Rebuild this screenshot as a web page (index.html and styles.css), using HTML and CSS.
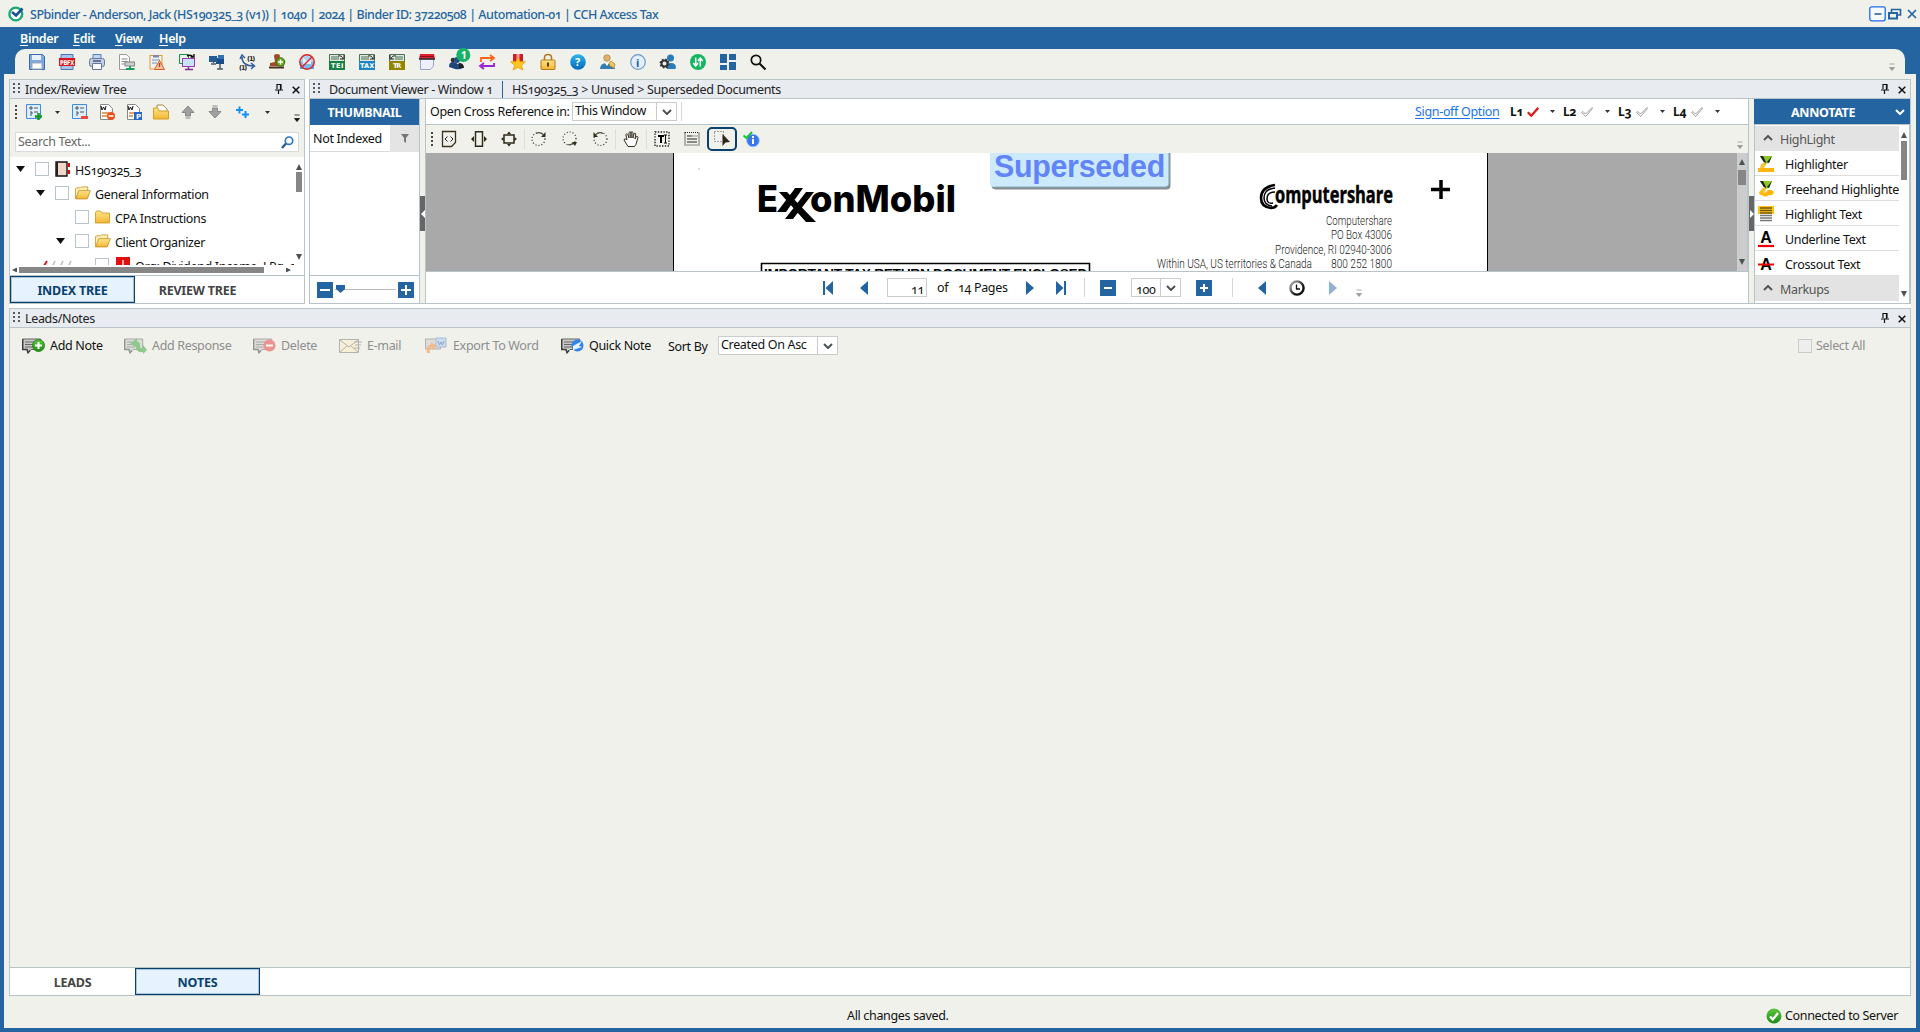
FILE: index.html
```html
<!DOCTYPE html>
<html lang="en">
<head>
<meta charset="utf-8">
<title>SPbinder</title>
<link rel="stylesheet" href="styles.css">
</head>
<body>
<svg class="defs" aria-hidden="true">
  <defs>
    <linearGradient id="gold" x2="0" y2="1"><stop offset="0" stop-color="#ffe58a"/><stop offset="1" stop-color="#f2b632"/></linearGradient>
    <linearGradient id="sky" x2="0" y2="1"><stop offset="0" stop-color="#29b6f0"/><stop offset="1" stop-color="#0667b8"/></linearGradient>
    <linearGradient id="ok" x2="0" y2="1"><stop offset="0" stop-color="#5cc83c"/><stop offset="1" stop-color="#1f8a1c"/></linearGradient>
    <linearGradient id="dial" x2="1" y2="1"><stop offset="0" stop-color="#bbb"/><stop offset=".7" stop-color="#111"/></linearGradient>
  </defs>
  <symbol id="pin" viewBox="0 0 8 12"><path d="M2 6V1.500h4V6M5.500 1v6M0 7h8M3.500 7v4" fill="none" stroke="#111" stroke-width="1.200"/></symbol>
  <symbol id="close" viewBox="0 0 8 8"><path d="M.7.7l6.600 6.600M7.300.7L.7 7.300" stroke="#111" stroke-width="1.500"/></symbol>
  <symbol id="grip" viewBox="0 0 7 10"><path d="M0 0h2v2H0zM5 0h2v2H5zM0 4h2v2H0zM5 4h2v2H5zM0 8h2v2H0zM5 8h2v2H5z" fill="#555b60"/></symbol>
  <symbol id="dots" viewBox="0 0 2 14"><path d="M0 0h2v2H0zM0 4h2v2H0zM0 8h2v2H0zM0 12h2v2H0z" fill="#444"/></symbol>
  <symbol id="caret" viewBox="0 0 5 3"><path d="M0 0h5L2.500 3z" fill="#333"/></symbol>
  <symbol id="more" viewBox="0 0 6 8"><path d="M.5 1h5M.5 4.500h5L3 7.500z" stroke="currentColor" fill="currentColor" stroke-width=".8"/></symbol>
  <symbol id="chev" viewBox="0 0 10 6"><path d="M1 1l4 4 4-4" fill="none" stroke="currentColor" stroke-width="2"/></symbol>
  <symbol id="up" viewBox="0 0 6 6"><path d="M3 0l3 6H0z" fill="#4b5256"/></symbol>
  <symbol id="checkmark" viewBox="0 0 12 10"><path d="M.5 5.500L2 4.500 4.500 7 11 .5l.7.700L4.800 9.500z" fill="currentColor" stroke="#909090" stroke-width=".8"/></symbol>
  <symbol id="redcheck" viewBox="0 0 12 10"><path d="M.8 5.300l3.500 3.500L11.300.8" fill="none" stroke="#e01818" stroke-width="2.200"/></symbol>
  <symbol id="folder" viewBox="0 0 16 14"><path d="M.5 13V2.500l1-1.500h4l1.500 2h7.500v10z" fill="url(#gold)" stroke="#c89420" stroke-width=".8"/></symbol>
  <symbol id="folderopen" viewBox="0 0 17 14"><path d="M.5 13V2.500l1-1h4L7 .5h6.500V5" fill="#fff0b0" stroke="#c08a20" stroke-width=".8"/><path d="M.7 13.300L4 4.500h12.300L13 13.300z" fill="url(#gold)" stroke="#c08a20" stroke-width=".8"/></symbol>
  <symbol id="note" viewBox="0 0 23 16"><path d="M.7 1h18v10.500H9L6 14.800l-1-3.300H.7z" fill="#c9c9c9" stroke="#666"/><path d="M.7 1v10.500H5l1 3.300 2-2.300" fill="none" stroke="#3c3c3c" stroke-width="1.400"/><path d="M3 4h10M3 6.500h9M3 9h8" stroke="#666"/></symbol>
  <symbol id="page" viewBox="0 0 16 16"><path d="M1.500.5h8l4 4v11h-12z" fill="#fff" stroke="#888"/></symbol>
</svg>

<div class="app">
  <header class="titlebar">
    <svg class="logo" viewBox="0 0 16 16"><circle cx="7.800" cy="8" r="6.400" fill="#fff" stroke="#19a974" stroke-width="2.400"/><path d="M4 6l4 3.500 6.500-7" fill="none" stroke="#1f4e96" stroke-width="2.600"/></svg>
    <span class="title">SPbinder - Anderson, Jack (HS190325_3 (v1)) | 1040 | 2024 | Binder ID: 37220508 | Automation-01 | CCH Axcess Tax</span>
    <svg class="winctl" width="50" height="16" viewBox="0 0 50 16"><rect x=".8" y=".8" width="15.400" height="14" rx="2" fill="#f6faff" stroke="#1a6cf0" stroke-width="1.300"/><path d="M5.500 8h7" stroke="#2465a1" stroke-width="1.600"/><path d="M22.500 6V3.500h9V9H29" fill="none" stroke="#2465a1" stroke-width="1.600"/><rect x="20" y="7" width="8" height="5.500" fill="none" stroke="#2465a1" stroke-width="2"/><path d="M39 4l8 8M47 4l-8 8" stroke="#2465a1" stroke-width="1.700"/></svg>
  </header>
  <nav class="menubar"><span><u>B</u>inder</span><span><u>E</u>dit</span><span><u>V</u>iew</span><span><u>H</u>elp</span></nav>

  <div class="ribbon">
    <svg viewBox="0 0 16 16"><path d="M.5.5h13l2 2v13H.5z" fill="#7ea8de" stroke="#3a68b4"/><path d="M3 1h9v5H3z" fill="#e8f0fb"/><path d="M3 9h10v6H3z" fill="#fff" stroke="#9ab"/></svg>
    <svg viewBox="0 0 16 16"><path d="M2 .5h12v15H2z" fill="#a9c4e8" stroke="#4a75b8"/><path d="M0 4h16v8H0z" fill="#d8141c"/><text x="1" y="10.700" class="tag" textLength="14" lengthAdjust="spacingAndGlyphs">PBFX</text></svg>
    <svg viewBox="0 0 16 16"><path d="M4 .5h8V5H4z" fill="#bcd8f7" stroke="#5a7fb5"/><rect x=".5" y="4.500" width="15" height="8" rx="2" fill="#c5cfe2" stroke="#66799c"/><path d="M3.500 9.500h9v6h-9z" fill="#fff" stroke="#66799c"/><path d="M4 7h8" stroke="#46587c" stroke-width="1.500"/></svg>
    <svg viewBox="0 0 16 16"><path d="M.5.500h7l3 3v12H.5z" fill="#fff" stroke="#999"/><path d="M2.500 5h6M2.500 7.500h6M2.500 10h4" stroke="#888"/><rect x="6" y="8" width="9.500" height="4" fill="#ccc" stroke="#888"/><path d="M11 12v3M7 15h8.500" stroke="#169c5c" stroke-width="1.800"/></svg>
    <svg viewBox="0 0 16 16"><rect x="1" y="1.500" width="12" height="13.500" fill="#f2f2ee" stroke="#e09a30"/><path d="M4 1h6v2.500H4z" fill="#7889b0"/><path d="M3 6h8M3 9h5" stroke="#6a92c8"/><path d="M10.500 6.500l5 9h-10z" fill="#f0c8a0" stroke="#d95a28"/><path d="M10.500 9v4" stroke="#c33" stroke-width="1.400"/></svg>
    <svg viewBox="0 0 16 16"><path d="M.5.500h9v9h-9z" fill="#e6f6ea" stroke="#1d8a48"/><rect x="3.500" y="4.500" width="12" height="8" fill="#c6e4ff" stroke="#a238b8"/><path d="M9.500 13v2M6 15.500h8" stroke="#7a2a98" stroke-width="1.400"/><path d="M8 2q4-2 6 1M11.500 3H15V0" fill="none" stroke="#111" stroke-width="1.400"/></svg>
    <svg viewBox="0 0 16 16"><path d="M7 4h8v6H7z" fill="#1b4e88"/><path d="M9 1h6v4H9z" fill="#2e72b4"/><path d="M0 2h8v6H0z" fill="#235d98"/><path d="M4.500 7v2M11 10v5M8 15h6M2 10h5" stroke="#4a5a68" stroke-width="1.500"/></svg>
    <svg viewBox="0 0 16 16"><path d="M3 3q0 9 12 9M1 5l2-4 3 3M12 9l3.500 3L12 15" fill="none" stroke="#335c9e" stroke-width="1.500"/><text x="8" y="6.500" class="mini" textLength="8">(1)</text><text x="0" y="15.500" class="mini" textLength="8">(1)</text></svg>
    <svg viewBox="0 0 16 16"><path d="M5 2q0-2 3-2t3 2L9.500 8H15v4H1V9l5-1z" fill="#a04c28"/><path d="M0 13.500h15" stroke="#4b2c20" stroke-width="2"/><circle cx="11.500" cy="8" r="4.300" fill="#68a820" stroke="#36700c"/><path d="M9 8h5M11.500 5.500v5" stroke="#fff" stroke-width="1.400"/></svg>
    <svg viewBox="0 0 16 16"><path d="M1 8h14v7H1z" fill="#4ba4ef"/><circle cx="8" cy="8" r="7.200" fill="#8ac4ef" fill-opacity=".7" stroke="#e02424" stroke-width="1.500"/><path d="M4 4l4 3 4-3v6H4z" fill="#e2f0fb"/><path d="M3 13L13 3" stroke="#e02424" stroke-width="1.500"/></svg>
    <svg viewBox="0 0 16 16"><path d="M.5.500h15v7H.5z" fill="#dfe8df" stroke="#4d7450"/><path d="M2 3h8M2 5h8" stroke="#487050"/><path d="M9 2q4-1 5 3M11 5h4V1" fill="none" stroke="#222"/><path d="M0 7h16v9H0z" fill="#197e43"/><text x="2" y="14" class="tag" textLength="12">TEI</text></svg>
    <svg viewBox="0 0 16 16"><path d="M.5.500h15v7H.5z" fill="#dfe8df" stroke="#4d7450"/><path d="M2 3h8M2 5h8" stroke="#487050"/><path d="M9 2q4-1 5 3M11 5h4V1" fill="none" stroke="#222"/><path d="M0 7h16v9H0z" fill="#1d83c4"/><text x="1" y="14" class="tag" textLength="14">TAX</text></svg>
    <svg viewBox="0 0 16 16"><path d="M.5.500h15v7H.5z" fill="#dfe8df" stroke="#4d7450"/><path d="M6 3h8M6 5h8" stroke="#487050"/><path d="M7 2q-4-1-5 3M5 5H1V1" fill="none" stroke="#222"/><path d="M0 7h16v9H0z" fill="#918500"/><text x="4" y="14" class="tag" textLength="8">TR</text></svg>
    <svg viewBox="0 0 16 16"><path d="M1 0h14l1 5H0z" fill="#e0202c"/><path d="M1 2.500h14" stroke="#8c1018"/><path d="M1.500 5h13v7l-3 3.500h-10z" fill="#edf0fa" stroke="#9ba2c8"/><path d="M0 5h16" stroke="#222" stroke-width="1.500"/></svg>
    <svg viewBox="0 0 16 16"><circle cx="4" cy="6" r="2.300" fill="#333"/><circle cx="8" cy="6" r="3" fill="#224f86"/><path d="M0 13q0-5 4-5t4 2q4-2 6 4-3 2-8 1z" fill="#1f4679"/><path d="M10 9q5 0 5 5h-5z" fill="#222"/><circle cx="14.300" cy="1" r="7" fill="#17b26a"/><text x="12" y="4.500" class="count">1</text></svg>
    <svg viewBox="0 0 16 16"><path d="M2 8V4h11M11 1l4 3-4 3" fill="none" stroke="#ff641e" stroke-width="1.800"/><path d="M15 9v3H3M5 9l-4 3 4 3" fill="none" stroke="#9a20d0" stroke-width="1.800"/></svg>
    <svg viewBox="0 0 16 16"><path d="M3 0h10v8H3z" fill="#cc2028"/><path d="M6.500 0h3v6h-3z" fill="#f29c9c"/><path d="M8 3l2 4.500 5.500.3-4 3.500 1.500 4.700-5-2.500L3 16l1.500-4.700-4-3.500L6 7.500z" fill="#ffc41e" stroke="#e39a0c" stroke-width=".7"/></svg>
    <svg viewBox="0 0 16 16"><path d="M4.500 7V3.500q0-3 3.500-3t3.500 3V7" fill="none" stroke="#ac7724" stroke-width="1.500"/><rect x="1" y="6" width="14" height="9.500" rx="1" fill="url(#gold)" stroke="#b97916"/><path d="M8 8.500v4" stroke="#5e3a08" stroke-width="2"/></svg>
    <svg viewBox="0 0 16 16"><circle cx="8" cy="8" r="7.800" fill="url(#sky)"/><text x="5" y="12" class="sym light">?</text></svg>
    <svg viewBox="0 0 16 16"><circle cx="7" cy="4" r="3.300" fill="#dfb26c" stroke="#a3782e" stroke-width=".6"/><path d="M0 15q0-6 7-6t8 6z" fill="#347eb4"/><path d="M5 9l2 3 2-3z" fill="#fff"/><path d="M9 9l2-2 4 3-1 4-4-2z" fill="#f2c454" stroke="#ae812a" stroke-width=".7"/></svg>
    <svg viewBox="0 0 16 16"><circle cx="8" cy="8" r="7.300" fill="#e3f0fc" stroke="#6e98c8" stroke-width="1.200"/><text x="6" y="12.500" class="sym blue">i</text></svg>
    <svg viewBox="0 0 16 16"><circle cx="10.500" cy="4" r="3.500" fill="#287cb8"/><path d="M7 15q-2-6 4-6 5 0 5 5l-1 1z" fill="#287cb8"/><circle cx="4.500" cy="9.500" r="3" fill="#eee" stroke="#333" stroke-width="2"/><circle cx="4.500" cy="9.500" r="4.300" fill="none" stroke="#333" stroke-width="1.400" stroke-dasharray="1.700"/></svg>
    <svg viewBox="0 0 16 16"><circle cx="8" cy="8" r="8" fill="#16b561"/><path d="M5.700 3.500v8M3.300 9l2.400 3 2.300-3M10.300 12.500v-8M8 7l2.300-3 2.400 3" fill="none" stroke="#fff" stroke-width="1.500"/></svg>
    <svg viewBox="0 0 16 16"><path d="M0 0h7v9H0zM9 0h7v6H9zM0 11h7v5H0zM9 8h7v8H9z" fill="#2465a1"/></svg>
    <svg viewBox="0 0 16 16"><circle cx="6" cy="6" r="4.700" fill="none" stroke="#111" stroke-width="1.700"/><path d="M9.500 9.500l6 6" stroke="#111" stroke-width="2.200"/></svg>
    <svg class="more dim"><use href="#more"/></svg>
  </div>

  <main class="workspace">
    <section class="top">
      <section class="panel index">
        <div class="phead"><svg class="gr"><use href="#grip"/></svg><span class="ptitle">Index/Review Tree</span><svg class="pin"><use href="#pin"/></svg><svg class="cl"><use href="#close"/></svg></div>
        <div class="treebar">
          <svg class="dots"><use href="#dots"/></svg>
          <svg class="i16" viewBox="0 0 16 16"><path d="M.5.500h14v14H.5z" fill="#dfefff" stroke="#3d8ce0"/><path d="M3 4h4M5 2v4M8 4h4M5 7v2h2M8 8h4M5 9v3" stroke="#456" fill="none"/><path d="M9 12.500h7M12.500 9v7" stroke="#159a20" stroke-width="2.500"/></svg>
          <svg class="car"><use href="#caret"/></svg>
          <svg class="i16" viewBox="0 0 16 16"><path d="M.5.500h14v14H.5z" fill="#dfefff" stroke="#3d8ce0"/><path d="M3 4h4M5 2v4M8 4h4M5 7v2h2M8 8h4M5 9v3" stroke="#456" fill="none"/><path d="M9 13.500h7" stroke="#f04a3c" stroke-width="3"/></svg>
          <svg class="i16" viewBox="0 0 16 16"><use href="#page"/><path d="M2 2l1 4 1.500-3L6 6l1-4" fill="none" stroke="#111"/><path d="M3 9h7M3 12h5" stroke="#e0843c" stroke-width="1.500"/><circle cx="12" cy="12" r="4" fill="#e8501e"/><path d="M9.500 12h5" stroke="#fff" stroke-width="1.500"/></svg>
          <svg class="i16" viewBox="0 0 16 16"><use href="#page"/><path d="M2 2l1 4 1.500-3L6 6l1-4" fill="none" stroke="#111"/><path d="M3 9h5M3 12h4" stroke="#e0843c" stroke-width="1.500"/><path d="M8 8h8v8H8z" fill="#2468c8"/><text x="10" y="14.500" class="tag big">P</text></svg>
          <svg class="i16" viewBox="0 0 16 16"><path d="M4 1h6l4 4v4H4z" fill="#f8f8f8" stroke="#aa8b48"/><path d="M.5 15V4h4l1.500 3h9.500v8z" fill="url(#gold)" stroke="#d89c20"/></svg>
          <svg class="i16" viewBox="0 0 16 16"><path d="M8 2l6 6.500h-3.500V12h-5V8.500H2zM5.500 14h5" fill="#a0a0a0" stroke="#888"/></svg>
          <svg class="i16" viewBox="0 0 16 16"><path d="M8 14L2 7.500h3.500V4h5v3.500H14zM5.500 2h5" fill="#a0a0a0" stroke="#888"/></svg>
          <svg class="i16" viewBox="0 0 16 16"><path d="M2 6h7M5.500 2.500v7M8 10.500h7M11.500 7v7" stroke="#1090ff" stroke-width="2"/></svg>
          <svg class="car"><use href="#caret"/></svg>
          <svg class="more low"><use href="#more"/></svg>
        </div>
        <div class="search"><span>Search Text...</span><svg width="13" height="13" viewBox="0 0 13 13"><circle cx="8" cy="4.700" r="3.700" fill="#fff" stroke="#2a78c2" stroke-width="1.700"/><path d="M5 7.500L1 12" stroke="#2a5c96" stroke-width="2.500"/></svg></div>
        <div class="treewrap">
          <div class="tree">
            <div class="node l0"><i class="tri"></i><i class="cb"></i><svg viewBox="0 0 16 16"><path d="M1 1h11v14H1z" fill="#f3d6ca" stroke="#111" stroke-width="1.400"/><path d="M2 1v14" stroke="#222" stroke-width="2"/><path d="M14 2v4M14 9v4" stroke="#e00" stroke-width="2"/></svg><span>HS190325_3</span></div>
            <div class="node l1"><i class="tri"></i><i class="cb"></i><svg><use href="#folderopen"/></svg><span>General Information</span></div>
            <div class="node l2"><i class="tri none"></i><i class="cb"></i><svg><use href="#folder"/></svg><span>CPA Instructions</span></div>
            <div class="node l2"><i class="tri"></i><i class="cb"></i><svg><use href="#folderopen"/></svg><span>Client Organizer</span></div>
            <div class="node l3"><svg class="marks" viewBox="0 0 36 10"><path d="M2 7l2 2 5-8" stroke="#e01818" fill="none" stroke-width="2"/><path d="M11 7l2 2 4-8M19 7l2 2 4-8M27 7l2 2 4-8" stroke="#bbb" fill="none" stroke-width="1.500"/></svg><i class="cb"></i><svg viewBox="0 0 16 16"><path d="M1 0h14v16H1z" fill="#e01010"/><path d="M8 3v5l4 3M8 8l-4 3" stroke="#fff" fill="none" stroke-width="1.200"/></svg><span>Org: Dividend Income, J Pg. 9</span></div>
          </div>
          <div class="vscroll"><svg><use href="#up"/></svg><i></i><svg class="down"><use href="#up"/></svg></div>
        </div>
        <div class="hscroll"><svg class="left"><use href="#up"/></svg><i></i><svg class="right"><use href="#up"/></svg></div>
        <div class="tabs"><span class="tab on">INDEX TREE</span><span class="tab">REVIEW TREE</span></div>
      </section>

      <section class="panel viewer">
        <div class="phead"><svg class="gr"><use href="#grip"/></svg><span class="ptitle">Document Viewer - Window 1</span><span class="crumb">HS190325_3 &gt; Unused &gt; Superseded Documents</span><svg class="pin"><use href="#pin"/></svg><svg class="cl"><use href="#close"/></svg></div>
        <div class="vbody">
          <aside class="thumbs">
            <div class="bluehead">THUMBNAIL</div>
            <div class="filter"><span>Not Indexed</span><i><svg width="8" height="9" viewBox="0 0 8 9"><path d="M0 0h8L5 4v5L3 7.500V4z" fill="#777"/></svg></i></div>
            <div class="thumblist"></div>
            <div class="slider"><b class="sq minus"></b><i class="track"><svg width="9" height="8" viewBox="0 0 9 8"><path d="M0 0h9v4L4.500 8 0 4z" fill="#2465a1"/></svg></i><b class="sq plus"></b></div>
          </aside>
          <div class="split"><i class="handle"><svg width="4" height="8" viewBox="0 0 4 8"><path d="M4 0v8L0 4z" fill="#fff"/></svg></i></div>
          <div class="doc">
            <div class="xref">
              <span>Open Cross Reference in:</span>
              <span class="combo"><em>This Window</em><b><svg><use href="#chev"/></svg></b></span>
              <i class="vsep"></i>
              <a>Sign-off Option</a>
              <strong>L1</strong><svg class="ck"><use href="#redcheck"/></svg><svg class="car"><use href="#caret"/></svg>
              <strong>L2</strong><svg class="ck"><use href="#checkmark"/></svg><svg class="car"><use href="#caret"/></svg>
              <strong>L3</strong><svg class="ck"><use href="#checkmark"/></svg><svg class="car"><use href="#caret"/></svg>
              <strong>L4</strong><svg class="ck"><use href="#checkmark"/></svg><svg class="car"><use href="#caret"/></svg>
            </div>
            <div class="tools">
              <svg class="dots"><use href="#dots"/></svg>
              <svg class="i16" viewBox="0 0 16 16"><path d="M1.500.500h13v11l-4 4h-9z" fill="none" stroke="#3b3320" stroke-width="1.300"/><path d="M6.500 5.500L4 8l2.500 2.500M9.500 5.500L12 8l-2.500 2.500" fill="none" stroke="#222"/></svg>
              <svg class="i16" viewBox="0 0 16 16"><path d="M4.500.700h7v14.600h-7z" fill="none" stroke="#2c2818" stroke-width="1.400"/><path d="M3 5v6L0 8zM13 5v6l3-3z" fill="#2c2818"/></svg>
              <svg class="i16" viewBox="0 0 16 16"><path d="M3 4h10v8H3z" fill="none" stroke="#2c2818" stroke-width="1.500"/><path d="M6 3h4L8 .5zM6 13h4l-2 2.500zM2.500 6v4L0 8zM13.500 6v4L16 8z" fill="#2c2818"/></svg>
              <i class="vs"></i>
              <svg class="i16" viewBox="0 0 16 16"><circle cx="7.500" cy="8" r="6.500" fill="none" stroke="#333" stroke-width="1.200" stroke-dasharray="1 2"/><path d="M5 2.500q4-2 7 1" fill="none" stroke="#554" stroke-width="1.200"/><path d="M14.500 1v5H10z" fill="#332c18"/></svg>
              <svg class="i16" viewBox="0 0 16 16"><circle cx="7.500" cy="7.500" r="6.500" fill="none" stroke="#333" stroke-width="1.200" stroke-dasharray="1 2"/><path d="M6 13.500q3 1 6-2" fill="none" stroke="#554" stroke-width="1.200"/><path d="M10 11h5l-2 4z" fill="#332c18"/></svg>
              <svg class="i16" viewBox="0 0 16 16"><circle cx="8.500" cy="8" r="6.500" fill="none" stroke="#333" stroke-width="1.200" stroke-dasharray="1 2"/><path d="M11 2.500q-4-2-7 1" fill="none" stroke="#554" stroke-width="1.200"/><path d="M1.500 1v5H6z" fill="#332c18"/></svg>
              <i class="vs"></i>
              <svg class="i16" viewBox="0 0 16 16"><path d="M5 15.500L1 9q0-2 3-.5L2.800 3.500q1-1.500 2 0L6 7V1.500q1-1.500 2 0V7V1.300q1.300-1.200 2 .2L9.900 7l1.200-4.500q1.300-.8 1.700.5L12 8l1.500-2.500q1.400-.5 1.500.8l-2 7-1.500 2.200z" fill="#fff" stroke="#332d20"/></svg>
              <i class="vs"></i>
              <svg class="i16" viewBox="0 0 16 16"><path d="M1 1h14v14H1z" fill="none" stroke="#222" stroke-width="1.400" stroke-dasharray="1.400"/><path d="M4 5h6M7 5v7" stroke="#000" stroke-width="2"/><path d="M10 4h3M11.500 4v8M10 12h3" stroke="#000"/></svg>
              <svg class="i16" viewBox="0 0 16 16"><path d="M1 1.500h14v12.500H1z" fill="none" stroke="#222" stroke-width="1.200" stroke-dasharray="1 1"/><path d="M3 5h5M3 8h10M3 11h10" stroke="#222"/><path d="M6 5h8" stroke="#999"/></svg>
              <span class="sel"><svg class="i16" viewBox="0 0 16 16"><path d="M.5.500h9v10h-9z" fill="none" stroke="#555" stroke-dasharray="1 2"/><path d="M8.500 3v12l3-3.500 4.500-.5z" fill="#2a2516"/></svg></span>
              <svg class="i16" viewBox="0 0 16 16"><circle cx="10" cy="9.500" r="6.300" fill="#3477ee" stroke="#9abcf8"/><path d="M10 5v2M10 8v5" stroke="#fff" stroke-width="2"/><path d="M.5 4.500L3.500 7 9 1" fill="none" stroke="#15c83c" stroke-width="2"/></svg>
              <svg class="more dim"><use href="#more"/></svg>
            </div>
            <div class="canvas">
              <div class="sheet">
                <svg width="813" height="118" viewBox="674 153 813 118">
                  <path d="M990 150h179v34q0 4-4 4H995q-5 0-5-4z" fill="#858d90" transform="translate(1.500 1.500)"/>
                  <path d="M990 150h179v33q0 4-4 4H995q-5 0-5-4z" fill="#cdeafd"/>
                  <path d="M1169 150v33q0 4-4 4H995" fill="none" stroke="#87aab8" stroke-width="1.200"/>
                  <text x="994" y="176.500" class="stamp" textLength="171" lengthAdjust="spacingAndGlyphs">Superseded</text>
                  <g class="exxon"><text x="757" y="212" textLength="21" lengthAdjust="spacingAndGlyphs">E</text><text x="810" y="212" textLength="146" lengthAdjust="spacingAndGlyphs">onMobil</text></g>
                  <path d="M779 192h8l29 30h-10zM777 212L793 191 795 188h8L786 212zM785 219L806 192h8L793 219z"/>
                  <path d="M1275 185q-14 2-14 13 0 9 10 10 4 0 6-3" fill="none" stroke="#000" stroke-width="2.600"/><path d="M1275 188q-11 1-11 10 0 7 8 8M1275 192q-8 0-8 7 0 5 6 4" fill="none" stroke="#000" stroke-width="1.500"/>
                  <text x="1275" y="203" class="cs" textLength="118" lengthAdjust="spacingAndGlyphs">omputershare</text>
                  <path d="M1441 180v19M1431 189.500h19" stroke="#000" stroke-width="3.500"/>
                  <g class="addr"><text x="1326" y="225" textLength="66" lengthAdjust="spacingAndGlyphs">Computershare</text><text x="1331" y="239" textLength="61" lengthAdjust="spacingAndGlyphs">PO Box 43006</text><text x="1275" y="253.500" textLength="117" lengthAdjust="spacingAndGlyphs">Providence, RI 02940-3006</text><text x="1157" y="268" textLength="155" lengthAdjust="spacingAndGlyphs">Within USA, US territories &amp; Canada</text><text x="1331" y="268" textLength="61" lengthAdjust="spacingAndGlyphs">800 252 1800</text></g>
                  <path d="M761.500 272v-8.500h328v8.500" fill="none" stroke="#000" stroke-width="1.600"/>
                  <text x="764" y="278" class="imp" textLength="323" lengthAdjust="spacingAndGlyphs">IMPORTANT TAX RETURN DOCUMENT ENCLOSED</text>
                  <path d="M699 168v2" stroke="#bbb"/>
                </svg>
              </div>
              <div class="vscroll wide"><svg><use href="#up"/></svg><i></i><svg class="down"><use href="#up"/></svg></div>
            </div>
            <div class="pager">
              <svg class="pa" viewBox="0 0 10 14"><path d="M0 0h2v14H0zM10 0v14L2.500 7z"/></svg>
              <svg class="pa" viewBox="0 0 8 14"><path d="M8 0v14L0 7z"/></svg>
              <span class="pagebox">11</span><span>of</span><span>14 Pages</span>
              <svg class="pa" viewBox="0 0 8 14"><path d="M0 0v14l8-7z"/></svg>
              <svg class="pa" viewBox="0 0 10 14"><path d="M8 0h2v14H8zM0 0v14l7.500-7z"/></svg>
              <i class="vsep"></i><b class="sq minus short"></b>
              <span class="combo zoom"><em>100</em><b><svg><use href="#chev"/></svg></b></span>
              <b class="sq plus short"></b><i class="vsep"></i>
              <svg class="pa" viewBox="0 0 8 14"><path d="M8 0v14L0 7z"/></svg>
              <svg class="i16" viewBox="0 0 16 16"><circle cx="8" cy="8" r="6.600" fill="#fff" stroke="url(#dial)" stroke-width="2.400"/><path d="M7.500 4.500V9H11" fill="none" stroke="#111" stroke-width="1.300"/></svg>
              <svg class="pa faded" viewBox="0 0 8 14"><path d="M0 0v14l8-7z"/></svg>
              <svg class="more dim"><use href="#more"/></svg>
            </div>
          </div>
          <div class="split rt"><i class="handle"><svg width="4" height="8" viewBox="0 0 4 8"><path d="M0 0v8l4-4z" fill="#fff"/></svg></i></div>
          <aside class="annotate">
            <div class="bluehead">ANNOTATE<svg class="hc"><use href="#chev"/></svg></div>
            <div class="alist">
              <div class="items">
                <div class="group"><svg><use href="#chev"/></svg>HighLight</div>
                <div class="item"><svg viewBox="0 0 16 16"><path d="M2 0h12l-3 7-4 1z" fill="#8ec820"/><path d="M2 0l5 8 1-2-3-6zM14 0l-3 7-2-1z" fill="#222"/><path d="M2 12l1-4 4-2 1 3-3 4z" fill="#f7c43c"/><path d="M0 12h16v4H0z" fill="#ffb60e"/></svg>Highlighter</div>
                <div class="item"><svg viewBox="0 0 16 16"><path d="M2 0h12l-3 7-4 1z" fill="#8ec820"/><path d="M2 0l5 8 1-2-3-6zM14 0l-3 7-2-1z" fill="#222"/><path d="M2 12l1-4 4-2 1 3-3 4z" fill="#f7c43c"/><path d="M1 11q3-2 4 0t4-1 7 1q-1 4-5 3-4 3-7 0-3 0-3-3" fill="#ffb60e"/></svg>Freehand Highlighter</div>
                <div class="item"><svg viewBox="0 0 16 16"><path d="M0 0h16v8H0z" fill="#fcc21c"/><path d="M2 2h12M2 4.500h12M2 7h12" stroke="#775b10" stroke-width="1.300"/><path d="M2 9.500h12M2 12h12M2 14.500h12" stroke="#777" stroke-width="1.400"/></svg>Highlight Text</div>
                <div class="item"><svg viewBox="0 0 16 16"><text x="2.200" y="12" class="glyph" textLength="11.500">A</text><path d="M0 15h16" stroke="#f00000" stroke-width="2.200"/></svg>Underline Text</div>
                <div class="item"><svg viewBox="0 0 16 16"><text x="2.200" y="14" class="glyph" textLength="11.500">A</text><path d="M0 8.500h16" stroke="#f00000" stroke-width="2"/></svg>Crossout Text</div>
                <div class="group"><svg><use href="#chev"/></svg>Markups</div>
              </div>
              <div class="vscroll tall"><svg><use href="#up"/></svg><i></i><svg class="down"><use href="#up"/></svg></div>
            </div>
          </aside>
        </div>
      </section>
    </section>

    <section class="panel notes">
      <div class="phead"><svg class="gr"><use href="#grip"/></svg><span class="ptitle">Leads/Notes</span><svg class="pin"><use href="#pin"/></svg><svg class="cl"><use href="#close"/></svg></div>
      <div class="notebar">
        <svg class="ni" viewBox="0 0 23 16"><use href="#note"/><circle cx="16.500" cy="7.500" r="6" fill="url(#ok)" stroke="#2c861e"/><path d="M13 7.500h7M16.500 4v7" stroke="#fff" stroke-width="2"/></svg><span>Add Note</span>
        <svg class="ni off" viewBox="0 0 23 16"><use href="#note"/><path d="M6 6l7-6v3.500q3 0 3 4 0 3 2 3h1V7l4 5-4 4v-2q-7 1-7-5H12z" fill="#2fa02f"/></svg><span class="dis">Add Response</span>
        <svg class="ni off" viewBox="0 0 23 16"><use href="#note"/><circle cx="16.500" cy="7.500" r="6" fill="#e83838"/><path d="M13 7.500h7" stroke="#fff" stroke-width="2"/></svg><span class="dis">Delete</span>
        <svg class="ni off" viewBox="0 0 23 16"><path d="M.5 1.500h19v13H.5z" fill="#fff0c4" stroke="#777"/><path d="M1 2l9 7 9-7M1 14l7-6M19 14l-7-6M15 4h8M16 7h6M15 10h6" fill="none" stroke="#777"/></svg><span class="dis">E-mail</span>
        <svg class="ni off" viewBox="0 0 23 16"><path d="M.5 1h15v10H.5z" fill="#ccc" stroke="#777"/><path d="M11 0h10v9H11z" fill="#aecbf2" stroke="#5b86cc"/><path d="M13 3l1.500 4L16 4l1.500 3L19 3" fill="none" stroke="#2858a8"/><path d="M2 15q-2-7 4-9V4l6 4-5 4V9q-3 1-2 6z" fill="#f58236"/></svg><span class="dis">Export To Word</span>
        <svg class="ni" viewBox="0 0 23 16"><use href="#note"/><circle cx="16.500" cy="7.500" r="6" fill="#2f86ec"/><path d="M12 8l9-5-3 5 3 1-9 3z" fill="#eaf4ff"/></svg><span>Quick Note</span>
        <span class="sort">Sort By</span>
        <span class="combo"><em>Created On Asc</em><b><svg><use href="#chev"/></svg></b></span>
        <i class="cb grey"></i><span class="dis">Select All</span>
      </div>
      <div class="tabs"><span class="tab">LEADS</span><span class="tab on">NOTES</span></div>
    </section>
  </main>
  <footer class="status"><span class="saved">All changes saved.</span><svg width="16" height="16" viewBox="0 0 16 16"><circle cx="8" cy="8" r="7.500" fill="url(#ok)"/><path d="M4 8.500l2.800 3L12 5" fill="none" stroke="#fff" stroke-width="2.300"/></svg><span class="conn">Connected to Server</span></footer>
</div>
</body>
</html>
```
FILE: styles.css
```css
* { box-sizing: border-box; }
body { margin: 0; width: 1920px; height: 1032px; overflow: hidden; background: #2465a1; color: #111; font: 12.5px/16px "Noto Sans", sans-serif; font-variant-numeric: oldstyle-nums; letter-spacing: -.33px; white-space: nowrap; }
i, em { font-style: normal; }
svg { display: block; overflow: visible; flex: none; }
.defs { position: absolute; width: 0; height: 0; }
.app { height: 1032px; display: flex; flex-direction: column; border-bottom: 4px solid #2465a1; }

.titlebar { height: 27px; flex: none; display: flex; align-items: center; padding: 2px 0 0 8px; background: #f0f1eb; color: #2465a1; }
.logo { width: 16px; height: 16px; margin-right: 6px; margin-top: -2px; }
.title { width: 640px; font-weight: 500; letter-spacing: -.47px; }
.winctl { margin-left: auto; margin-right: 1px; margin-top: -2px; }
.menubar { height: 22px; flex: none; display: grid; grid-template-columns: 53px 42px 44px 60px; align-items: center; padding-left: 20px; padding-top: 1px; color: #fff; font-weight: 600; }
.menubar u { text-underline-offset: 2px; }
.ribbon { height: 25px; flex: none; margin: 0 15px; padding: 1px 10px 0 14px; display: flex; align-items: center; gap: 14.040px; background: #f0f1eb; border-radius: 10px 10px 0 0; }
.ribbon > svg { width: 16px; height: 16px; }
.ribbon > .more { width: 6px; height: 8px; margin-left: auto; margin-top: 10px; }
.tag { font: bold 6.500px "DejaVu Sans", sans-serif; fill: #fff; }
.tag.big { font-size: 7px; }
.mini { font: bold 6.500px "DejaVu Sans", sans-serif; fill: #222; }
.count { font: bold 10px "Noto Sans", sans-serif; fill: #fff; }
.sym { font: bold 11px "Noto Sans", sans-serif; }
.light { fill: #fff; }
.blue { fill: #1a5faf; }

.workspace { flex: 1; min-height: 0; margin: 0 4px; padding: 5px 5px 0; background: #f0f1eb; display: flex; flex-direction: column; }
.top { height: 229px; flex: none; display: flex; gap: 4px; padding-bottom: 4px; background: #fff; }
.panel { border: 1px solid #b9c4c9; background: #f0f1eb; display: flex; flex-direction: column; }
.index { width: 296px; flex: none; }
.viewer { flex: 1; min-width: 0; }
.notes { height: 688px; flex: none; }
.phead { height: 19px; flex: none; display: flex; align-items: center; background: #e8ebf0; border-bottom: 1px solid #b9c4c9; padding: 0 4px 0 3px; color: #222; }
.phead span { padding-top: 1px; }
.gr { width: 7px; height: 10px; margin-top: -2px; margin-right: 5px; }
.pin { width: 8px; height: 12px; margin-left: auto; margin-right: 9px; margin-top: 0; }
.cl { width: 8px; height: 8px; margin-top: 1px; }
.viewer .ptitle { margin-left: 4px; width: 173px; }
.crumb { border-left: 1px solid #2465a1; padding-left: 9px; }

.treebar { height: 33px; flex: none; display: grid; grid-template-columns: 11px 28px 18px 27px 27px 27px 27px 27px 27px 27px 23px 10px; align-items: center; justify-content: start; padding: 0 0 7px 5px; }
.dots { width: 2px; height: 14px; }
.i16 { width: 16px; height: 16px; }
.car { width: 5px; height: 3px; }
.more { width: 6px; height: 8px; color: #111; }
.more.dim { color: #999; }
.more.low { margin: 12px 0 0 10px; }
.treebar .car { margin-left: 1px; }
.treebar .car:nth-last-child(2) { margin-left: 4px; }
.search { height: 20px; flex: none; margin: 0 5px; border: 1px solid #d8dcdc; background: #fff; display: flex; align-items: center; justify-content: space-between; padding: 0 4px 0 2px; color: #666; }
.treewrap { height: 109px; flex: none; margin-top: 5px; background: #fff; display: flex; justify-content: space-between; }
.tree { height: 108px; overflow: hidden; flex: 1; }
.node { height: 24px; display: flex; align-items: center; color: #111; }
.node span { padding-top: 3px; }
.node.l0 { padding-left: 6px; }
.node.l1 { padding-left: 26px; }
.node.l2 { padding-left: 46px; }
.node.l3 { padding-left: 28px; }
.node svg { width: 16px; height: 16px; margin-right: 4px; }
.node svg:has(use) { height: 14px; }
.node .marks { width: 36px; height: 10px; margin-right: 21px; }
.tri { width: 9px; height: 6px; margin-right: 10px; background: #111; clip-path: polygon(0 0, 100% 0, 50% 100%); }
.tri.none { visibility: hidden; }
.cb { width: 14px; height: 14px; flex: none; border: 1px solid #b9c4c9; background: #fff; margin-right: 6px; }
.vscroll { width: 11px; padding: 7px 3px 6px 2px; display: flex; flex-direction: column; align-items: center; background: #fff; }
.vscroll svg { width: 6px; height: 6px; }
.vscroll i { width: 6px; height: 20px; background: #868686; margin: 2px 0 auto; }
.index .vscroll { width: 10px; }
.down { transform: rotate(180deg); }
.hscroll { height: 9px; flex: none; display: flex; align-items: center; padding: 0 10px 2px 2px; background: #fff; }
.hscroll svg { width: 5px; height: 6px; }
.hscroll .left { transform: rotate(-90deg); }
.hscroll .right { transform: rotate(90deg); margin-left: 22px; }
.hscroll i { width: 245px; height: 6px; margin-left: 2px; background: #868686; }
.tabs { margin-top: auto; height: 28px; flex: none; border-top: 1px solid #b9c4c9; background: #fff; display: flex; }
.tab { width: 125px; height: 27px; display: flex; align-items: center; justify-content: center; font-weight: 700; color: #444; letter-spacing: -.2px; padding-top: 2px; }
.tab.on { background: #e6f3ff; border: 1px solid #08406e; color: #08406e; box-shadow: inset 0 0 0 1px #a9c3d6; }

.vbody { flex: 1; min-height: 0; display: flex; }
.thumbs { width: 110px; flex: none; display: flex; flex-direction: column; background: #fff; border-right: 1px solid #b9c4c9; }
.bluehead { height: 26px; flex: none; padding-top: 2px; background: #2465a1; color: #fff; font-weight: 700; display: flex; align-items: center; justify-content: center; }
.filter { height: 27px; display: flex; align-items: center; justify-content: space-between; padding-left: 3px; border-bottom: 1px solid #d8dcdc; }
.filter span { padding-top: 1px; }
.filter i { width: 29px; height: 27px; display: flex; align-items: center; justify-content: center; background: #e4e4e4; }
.thumblist { flex: 1; }
.slider { height: 28px; border-top: 1px solid #b9c4c9; display: flex; align-items: center; padding: 0 5px 0 7px; gap: 2px; }
.sq { width: 16px; height: 16px; flex: none; background: linear-gradient(#fff, #fff) center / 10px 1.500px no-repeat #2465a1; }
.sq.plus { background: linear-gradient(#fff, #fff) center / 10px 2px no-repeat, linear-gradient(#fff, #fff) center / 2px 10px no-repeat, #2465a1; }
.sq.minus { background: linear-gradient(#fff, #fff) center / 10px 2px no-repeat, #2465a1; }
.sq.short { background-size: 8px 2px, 2px 8px, auto; }
.sq.minus.short { background-size: 8px 2px, auto; }
.track { flex: 1; height: 1px; background: #bbb; }
.track svg { margin: -4px 0 0 1px; }
.split { width: 5px; flex: none; background: #f0f1eb; display: flex; align-items: flex-start; }
.handle { width: 5px; height: 35px; margin-top: 97px; background: #666; display: flex; align-items: center; justify-content: flex-end; }
.doc { width: 1324px; flex: none; border: 0 solid #b9c4c9; border-width: 0 1px; display: flex; flex-direction: column; }
.xref { height: 26px; flex: none; background: #fff; border-bottom: 1px solid #b9c4c9; display: grid; grid-template-columns: 142px 109px 734px 95px 17px 23px 13px 18px 24px 13px 18px 24px 13px 18px 24px 10px; align-items: center; padding-left: 4px; }
.combo { height: 19px; width: 105px; border: 1px solid #ccc; background: #fff; display: flex; justify-content: space-between; color: #111; }
.combo em { padding-left: 2px; line-height: 16px; }
.combo b { width: 20px; border-left: 1px solid #ccc; display: flex; align-items: center; justify-content: center; color: #4b5256; }
.combo b svg { width: 10px; height: 6px; }
.vsep { width: 1px; height: 19px; background: #d5d8d8; }
.xref a { color: #1a73f0; text-decoration: underline; text-underline-offset: 2px; }
.xref strong { font-size: 12px; }
.ck { width: 12px; height: 10px; color: #f4f4f4; }
.tools { height: 28px; flex: none; display: grid; grid-template-columns: 10px 30px 30px 23px 7px 31px 30px 23px 8px 23px 8px 30px 23px 36px 994px 10px; align-items: center; padding-left: 5px; }
.tools .vs { width: 1px; height: 20px; background: #ddd; }
.sel { width: 30px; height: 24px; border: 2px solid #08406e; border-radius: 5px; display: grid; place-items: center; }
.tools .more { margin-top: 12px; }
.canvas { height: 118px; flex: none; background: #a9a9a9; display: flex; justify-content: space-between; overflow: hidden; }
.sheet { margin-left: 247px; width: 815px; border: 0 solid #000; border-width: 0 1px; background: #fff; }
.sheet svg { overflow: hidden; }
.stamp { font: bold 32px "Liberation Sans", sans-serif; fill: #6184f8; }
.exxon { font: 800 37px Inter, sans-serif; letter-spacing: 0; }
.cs { font: bold 23px "Open Sans", sans-serif; letter-spacing: 0; stroke: #000; stroke-width: .5px; }
.addr { font: 300 12px Roboto, sans-serif; fill: #222; font-variant-numeric: lining-nums; letter-spacing: 0; }
.imp { font: bold 13px "Liberation Sans", sans-serif; }
.vscroll.wide { width: 11px; background: #ccc; padding: 6px 2px; border-right: 1px solid #b9c4c9; }
.vscroll.wide i { width: 8px; height: 15px; margin-top: 5px; }
.pager { flex: 1; border-top: 1px solid #b9c4c9; background: #fff; display: grid; grid-template-columns: 37px 27px 50px 21px 68px 30px 28px 16px 31px 65px 36px 26px 31px 40px 27px 10px; align-items: center; padding-left: 397px; }
.pager span { padding-top: 1px; }
.pa { height: 14px; width: auto; justify-self: start; fill: #2465a1; }
.faded { opacity: .5; }
.pagebox { width: 40px; height: 19px; border: 1px solid #ccc; text-align: right; padding-right: 2px; line-height: 19px; }
.pager .zoom { width: 50px; padding-top: 0; }
.zoom em { padding-left: 4px; line-height: 21px; }
.pager .more { margin-top: 11px; }
.split.rt .handle { justify-content: center; }
.annotate { flex: 1; min-width: 0; display: flex; flex-direction: column; background: #fff; }
.annotate .bluehead { justify-content: space-between; padding-right: 5px; padding-left: 37px; height: 25px; }
.hc { width: 10px; height: 6px; margin-top: -1px; }
.alist { height: 179px; border: 1px solid #b9c4c9; border-bottom: 0; display: flex; }
.items { width: 144px; flex: none; overflow: hidden; padding-top: 1px; }
.item { height: 25px; border-bottom: 1px solid #ddd; display: flex; align-items: center; padding-left: 3px; padding-top: 3px; }
.item svg { width: 16px; height: 16px; margin-right: 11px; margin-top: -2px; }
.glyph { font: bold 16px "Liberation Sans", sans-serif; }
.group { height: 25px; background: #e3e3e3; color: #555; display: flex; align-items: center; padding: 2px 0 0 8px; }
.group svg { width: 10px; height: 6px; margin-right: 7px; margin-top: -3px; transform: rotate(180deg); }
.vscroll.tall { padding: 7px 2px 6px; }
.vscroll.tall i { height: 39px; margin-top: 3px; }

.notebar { flex: none; display: grid; grid-template-columns: 28px 74px 28px 101px 28px 58px 28px 58px 28px 108px 28px 79px 50px 1080px 18px 60px; align-items: center; padding: 8px 0 0 12px; }
.ni { width: 23px; height: 16px; }
.off { opacity: .5; }
.dis { color: #8e8e8e; }
.notebar .combo { width: 120px; }
.notebar .sort { padding-top: 2px; }
.cb.grey { background: #eee; border-color: #ccc; }
.status { height: 32px; flex: none; margin: 0 4px; padding-top: 7px; background: #f0f1eb; display: flex; align-items: center; }
.saved { margin-left: 843px; width: 919px; }
.conn { margin-left: 3px; }
```
